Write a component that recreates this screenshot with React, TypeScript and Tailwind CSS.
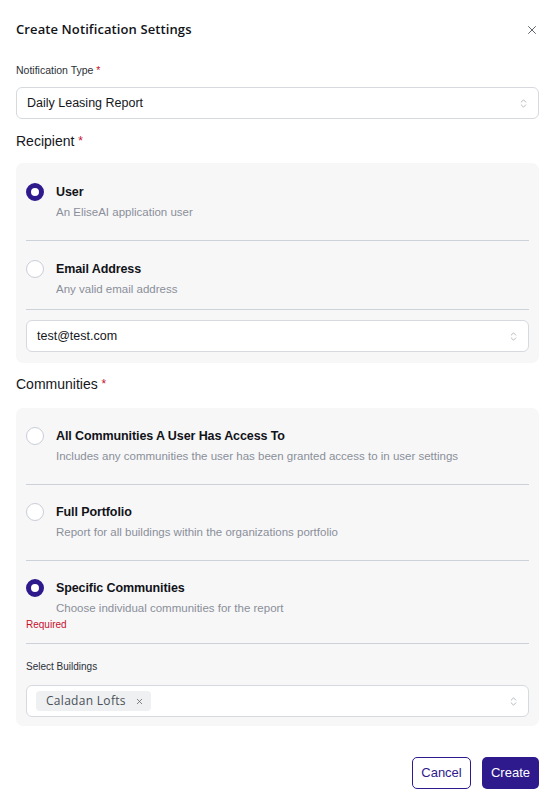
import React from 'react';
import { X, ChevronsUpDown } from 'lucide-react';

const PURPLE = 'border-[#2e1a8c]';

interface RadioRowProps {
  title: string;
  subtitle: string;
  checked?: boolean;
  className?: string;
}

const Radio: React.FC<{ checked?: boolean }> = ({ checked }) =>
  checked ? (
    <div className={`w-[18px] h-[18px] rounded-full border-[5.5px] ${PURPLE} bg-white`} />
  ) : (
    <div className="w-[18px] h-[18px] rounded-full border border-[#c9ced6] bg-white" />
  );

const RadioRow: React.FC<RadioRowProps> = ({ title, subtitle, checked, className }) => (
  <div className={`flex ${className ?? ''}`}>
    <div className="w-[30px] h-[20px] flex items-center">
      <Radio checked={checked} />
    </div>
    <div>
      <div className="h-[20px] leading-[20px] text-[12.5px] font-bold tracking-[-0.1px] text-[#111318]">{title}</div>
      <div className="h-[20px] leading-[20px] text-[11.5px] text-[#8a8f99]">{subtitle}</div>
    </div>
  </div>
);

const SelectBox: React.FC<{ children: React.ReactNode; className?: string }> = ({ children, className }) => (
  <div
    className={`h-[32px] bg-white border border-[#d6d9de] rounded-[6px] flex items-center justify-between pr-[9px] ${className ?? ''}`}
  >
    <div className="flex items-center">{children}</div>
    <ChevronsUpDown className="w-[11px] h-[11px] text-[#9aa0a8]" strokeWidth={1.6} />
  </div>
);

const Divider = () => <div className="h-px bg-[#cdd2da]" />;

export default function App() {
  return (
    <div
      className="w-[555px] min-h-[806px] bg-white px-[16px] pt-[20px] text-[#111318]"
      style={{ fontFamily: '"Liberation Sans", Arial, sans-serif' }}
    >
      {/* Header */}
      <div className="flex items-center justify-between h-[20px]">
        <h1
          className="text-[13px] font-semibold tracking-[0.1px] text-[#111318]"
          style={{ fontFamily: '"Open Sans", Inter, sans-serif' }}
        >
          Create Notification Settings
        </h1>
        <X className="w-[14px] h-[14px] text-[#5f646c]" strokeWidth={1.7} />
      </div>

      {/* Notification type */}
      <div className="mt-[23px] h-[14px] leading-[14px] text-[10.5px] text-[#2b2f36]">
        Notification Type <span className="text-[#c8102e]">*</span>
      </div>
      <SelectBox className="mt-[10px] pl-[10px]">
        <span className="text-[12.5px] text-[#15171c]">Daily Leasing Report</span>
      </SelectBox>

      {/* Recipient */}
      <div className="mt-[12px] h-[20px] leading-[20px] text-[14px] text-[#15171c]">
        Recipient <span className="text-[#c8102e] text-[12px] align-top">*</span>
      </div>
      <div className="mt-[12px] bg-[#f7f7f8] rounded-[7px] px-[10px] pb-[11px]">
        <RadioRow title="User" subtitle="An EliseAI application user" checked className="pt-[19px] pb-[18px]" />
        <Divider />
        <RadioRow title="Email Address" subtitle="Any valid email address" className="pt-[18px] pb-[10px]" />
        <Divider />
        <SelectBox className="mt-[10px] pl-[10px]">
          <span className="text-[12.5px] text-[#15171c]">test@test.com</span>
        </SelectBox>
      </div>

      {/* Communities */}
      <div className="mt-[11px] h-[20px] leading-[20px] text-[14px] text-[#15171c]">
        Communities <span className="text-[#c8102e] text-[12px] align-top">*</span>
      </div>
      <div className="mt-[14px] bg-[#f7f7f8] rounded-[7px] px-[10px] pb-[9px]">
        <RadioRow
          title="All Communities A User Has Access To"
          subtitle="Includes any communities the user has been granted access to in user settings"
          className="pt-[18px] pb-[18px]"
        />
        <Divider />
        <RadioRow
          title="Full Portfolio"
          subtitle="Report for all buildings within the organizations portfolio"
          className="pt-[17px] pb-[18px]"
        />
        <Divider />
        <div className="pt-[17px] pb-[11px]">
          <RadioRow title="Specific Communities" subtitle="Choose individual communities for the report" checked />
          <div className="h-[14px] leading-[14px] text-[10px] text-[#c8102e]">Required</div>
        </div>
        <Divider />
        <div className="mt-[16px] h-[14px] leading-[14px] text-[10px] text-[#2b2f36]">Select Buildings</div>
        <SelectBox className="mt-[11px] pl-[9px]">
          <span
            className="h-[20px] flex items-center gap-[9px] bg-[#eef0f2] rounded-[4px] pl-[10px] pr-[7px] text-[12px] text-[#4b5058] tracking-[0.3px]"
            style={{ fontFamily: '"Open Sans", Inter, sans-serif' }}
          >
            Caladan Lofts
            <X className="w-[9px] h-[9px] text-[#5b6068]" strokeWidth={2} />
          </span>
        </SelectBox>
      </div>

      {/* Footer */}
      <div className="mt-[31px] flex justify-end gap-[11px]">
        <button className="h-[32px] w-[59px] rounded-[5px] border border-[#2e1a8c] text-[#2e1a8c] text-[13px] bg-white">
          Cancel
        </button>
        <button className="h-[32px] w-[57px] rounded-[5px] bg-[#2e1a8c] text-white text-[13px]">Create</button>
      </div>
    </div>
  );
}
